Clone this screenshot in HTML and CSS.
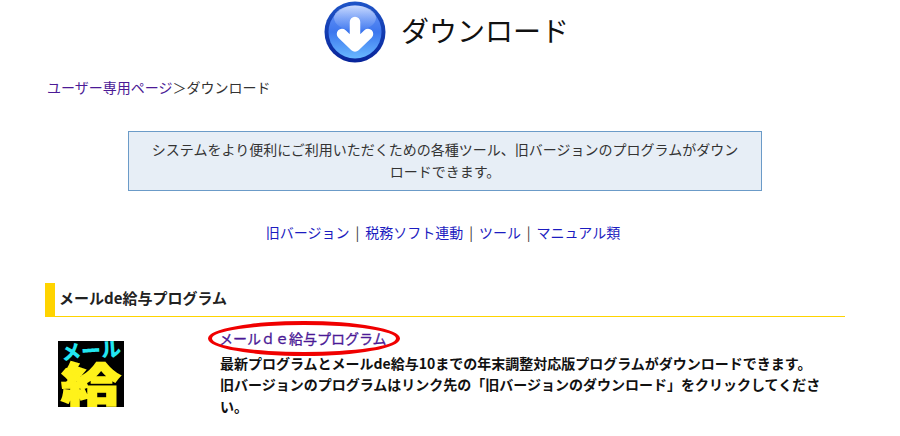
FILE: index.html
```html
<!DOCTYPE html>
<html lang="ja">
<head>
  <meta charset="UTF-8">
  <title>ダウンロード</title>
  <link rel="stylesheet" href="styles.css">
</head>
<body>

<div class="wrap">
  <h1 class="title">
    <svg class="title-icon" width="62" height="62" viewBox="0 0 62 62">
      <defs>
        <linearGradient id="ball" x1="0" y1="0" x2="0" y2="1">
          <stop offset="0" stop-color="#6d98f7"/>
          <stop offset="0.5" stop-color="#3d76ee"/>
          <stop offset="1" stop-color="#68b8ff"/>
        </linearGradient>
        <linearGradient id="ring" x1="0" y1="0" x2="0" y2="1">
          <stop offset="0" stop-color="#1f55c8"/>
          <stop offset="1" stop-color="#08249a"/>
        </linearGradient>
        <linearGradient id="shine" x1="0" y1="0" x2="0" y2="1">
          <stop offset="0" stop-color="#dbe6ff" stop-opacity="0.85"/>
          <stop offset="1" stop-color="#8fb2fa" stop-opacity="0.1"/>
        </linearGradient>
      </defs>
      <circle cx="31" cy="31" r="30.5" fill="url(#ring)"/>
      <circle cx="31" cy="31" r="26.5" fill="url(#ball)"/>
      <ellipse cx="31" cy="17" rx="21" ry="12.5" fill="url(#shine)"/>
      <path d="M31 21 V45 M18 33 L31 45.5 L44 33" fill="none" stroke="#fff" stroke-width="10.5" stroke-linecap="round" stroke-linejoin="round"/>
    </svg>
    <span class="title-text">ダウンロード</span>
  </h1>

  <p class="crumbs"><a href="#">ユーザー専用ページ</a>＞ダウンロード</p>

  <div class="notice">システムをより便利にご利用いただくための各種ツール、旧バージョンのプログラムがダウンロードできます。</div>

  <p class="jump">
    <a href="#">旧バージョン</a><span class="sep"> | </span><a href="#">税務ソフト連動</a><span class="sep"> | </span><a href="#">ツール</a><span class="sep"> | </span><a href="#">マニュアル類</a>
  </p>

  <h2 class="section">メールde給与プログラム</h2>

  <div class="item">
    <div class="logo">
      <span class="logo-top">メール</span>
      <span class="logo-main">給</span>
    </div>
    <div class="item-text">
      <a class="item-link" href="#">メールｄｅ給与プログラム</a>
      <p>最新プログラムとメールde給与10までの年末調整対応版プログラムがダウンロードできます。<br>旧バージョンのプログラムはリンク先の「旧バージョンのダウンロード」をクリックしてください。</p>
    </div>
  </div>
</div>

</body>
</html>
```

FILE: styles.css
```css
html, body {
  margin: 0;
  height: 436px;
  overflow: hidden;
}
body {
  background: #fff;
  color: #333;
  font-family: "Noto Sans CJK JP", "Liberation Sans", sans-serif;
  font-size: 14px;
}
a {
  text-decoration: none;
}
.wrap {
  width: 800px;
  margin-left: 45px;
}
.title {
  display: flex;
  align-items: center;
  justify-content: center;
  gap: 15px;
  margin: 0;
  padding: 1px 0 0 3px;
  font-size: 28px;
  font-weight: normal;
  color: #111;
}
.title-icon {
  display: block;
}
.title-text {
  padding-bottom: 4px;
}
.crumbs {
  margin: 13px 0 0 2px;
  line-height: 22px;
}
.crumbs a, .item-link {
  color: #4b1a96;
}
.notice {
  box-sizing: border-box;
  width: 634px;
  margin: 33px 0 0 83px;
  padding: 6px 20px 8px;
  background: #e7eef6;
  border: 1px solid #6b9bc8;
  line-height: 22px;
  text-align: center;
}
.jump {
  margin: 30px 0 0;
  padding-right: 4px;
  line-height: 22px;
  text-align: center;
}
.jump a {
  color: #1c1cc0;
}
.sep {
  margin: 0 2.8px;
}
.section {
  box-sizing: border-box;
  height: 34px;
  margin: 40px 0 0;
  padding-left: 4px;
  border-left: 10px solid #ffd400;
  border-bottom: 1px solid #ffd400;
  font-size: 15px;
  line-height: 30px;
  color: #222;
}
.item {
  display: flex;
  padding-top: 10px;
}
.logo {
  flex: none;
  width: 66px;
  height: 66px;
  margin: 14px 96px 0 13px;
  background: #000;
  font-weight: 900;
  text-align: center;
}
.logo-top {
  display: block;
  font-size: 20px;
  line-height: 17px;
  color: #22e6f0;
  transform: rotate(-4deg);
}
.logo-main {
  display: block;
  font-size: 46px;
  line-height: 47px;
  color: #fff21a;
  -webkit-text-stroke: 1.5px #fff21a;
  transform: scaleX(1.3);
}
.item-text {
  width: 610px;
  font-weight: bold;
  color: #111;
  line-height: 21.5px;
}
.item-link {
  display: inline-block;
  position: relative;
  left: -1px;
  font-weight: normal;
  line-height: 22px;
  -webkit-text-stroke: 0.3px #4b1a96;
}
.item-link::after {
  content: "";
  position: absolute;
  left: -11px;
  right: -13px;
  top: -6px;
  bottom: -7px;
  border: 4px solid #f00000;
  border-radius: 50%;
}
.item-text p {
  margin: 3px 0 0;
}
```
